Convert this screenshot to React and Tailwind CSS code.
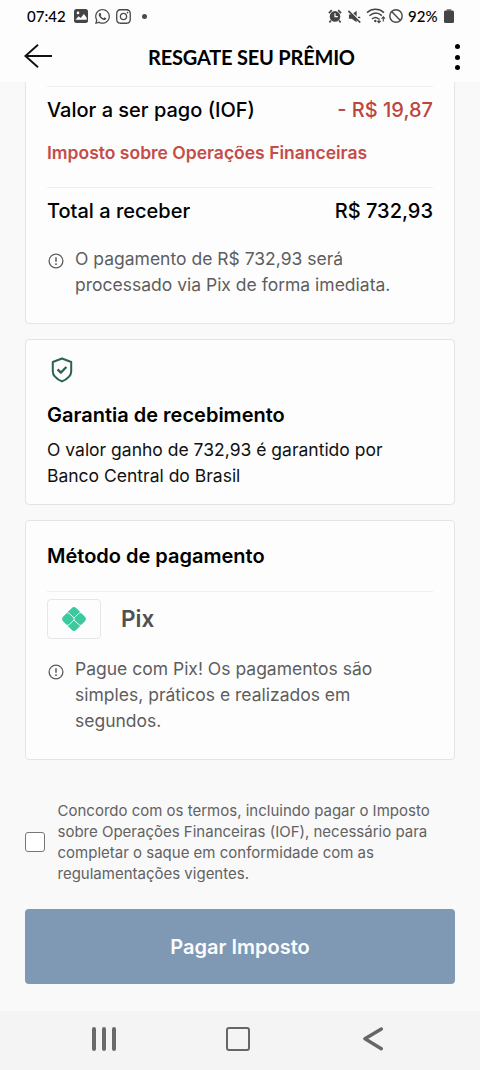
import React, { useState } from 'react';
import { FaWhatsapp, FaInstagram } from 'react-icons/fa';

const InfoIcon = () => (
  <svg className="w-4 h-4 shrink-0" viewBox="0 0 16 16" fill="none" stroke="#5c5c5c">
    <circle cx="8" cy="8" r="6.9" strokeWidth="1.3" />
    <path d="M8 4.2v4.6M8 10.2v1.7" strokeWidth="1.5" />
  </svg>
);

const ShieldIcon = () => (
  <svg className="w-[22px] h-[26px]" viewBox="0 0 22 26" fill="none" stroke="#2c6350" strokeWidth="2" strokeLinejoin="round">
    <path d="M11 1.5 20.2 5v9.4c0 4.6-4.2 7.7-9.2 10-5-2.3-9.2-5.4-9.2-10V5z" />
    <path d="m6.6 12.4 3.2 3.2 5.6-5.6" strokeWidth="2.3" />
  </svg>
);

const PixLogo = () => (
  <svg className="w-[26px] h-[26px]" viewBox="0 0 26 26">
    <rect x="3.7" y="3.7" width="18.6" height="18.6" rx="3.4" transform="rotate(45 13 13)" fill="#3cc9a0" />
    <path
      d="M4 6.7h2c1.1 0 1.9.3 2.6 1L13 12.1l4.4-4.4c.7-.7 1.5-1 2.6-1h2M4 19.3h2c1.1 0 1.9-.3 2.6-1l4.4-4.4 4.4 4.4c.7.7 1.5 1 2.6 1h2M13 12.1v1.8"
      fill="none"
      stroke="#fdfdfd"
      strokeWidth=".9"
    />
  </svg>
);

const StatusBar = () => (
  <div className="h-8 flex items-center pl-[27px] pr-[26px] text-[#4a4a4a]">
    <span className="w-[39px] text-[15px] leading-none font-medium text-black font-['Lato',sans-serif]">07:42</span>
    <svg className="ml-2 w-[14px] h-[14px]" viewBox="0 0 14 14">
      <rect width="14" height="14" rx="2.5" fill="#454545" />
      <path d="M1.5 10.8 4.6 7.3l2 1.7 3.3-4 2.8 3.7v2.1z" fill="#fff" />
      <circle cx="4" cy="3.9" r="1.3" fill="#fff" />
    </svg>
    <FaWhatsapp className="ml-[6px]" size={17} />
    <FaInstagram className="ml-[4px]" size={17} />
    <span className="ml-[10px] w-[5px] h-[5px] rounded-full bg-[#4a4a4a]" />
    <div className="ml-auto flex items-center">
      {/* alarm */}
      <svg className="w-[14px] h-[14px]" viewBox="0 0 14 14">
        <circle cx="7" cy="7.4" r="5.3" fill="#454545" />
        <path d="M.9 4.2 3.8 1.2M13.1 4.2l-2.9-3M2.8 11.6l-1.4 1.8M11.2 11.6l1.4 1.8" stroke="#454545" strokeWidth="1.7" />
        <path d="M7 4.2v3.5h2.8" stroke="#fff" strokeWidth="1.2" fill="none" />
      </svg>
      {/* muted speaker */}
      <svg className="ml-[6px] w-[13px] h-[13px]" viewBox="0 0 14 14">
        <path d="M1 4.8h3L9.3.8v12.4L4 9.3H1z" fill="#454545" />
        <path d="M10.6 8h2.6" stroke="#454545" fill="none" strokeWidth="1.5" />
        <path d="M1.2 0 14 12.6" stroke="#fff" strokeWidth="1.3" />
        <path d="M.4 1 13.2 13.6" stroke="#454545" strokeWidth="1.7" />
      </svg>
      <svg className="ml-[5px] w-[20px] h-[16px]" viewBox="0 0 20 16" fill="none" stroke="#454545" strokeWidth="1.4">
        <path d="M1 4.6c5-4.4 12-4.4 17 0M3.4 7.8c4-3.5 8.6-3.5 12.4-.2M6 11c2.2-2 4.6-2 6.5-.2" />
        <circle cx="9.3" cy="13" r="1.2" fill="#454545" stroke="none" />
        <path d="M13 10v4.6m-1.7-1.7 1.7 1.8 1.7-1.8M17.3 13.6V8.8m-1.7 1.8 1.7-1.8 1.7 1.8" strokeWidth="1.1" />
      </svg>
      <svg className="ml-[3px] w-[14px] h-[14px]" viewBox="0 0 14 14" fill="none" stroke="#454545" strokeWidth="1.4">
        <circle cx="7" cy="7" r="6.2" />
        <path d="m2.6 2.6 8.8 8.8" />
      </svg>
      <span className="ml-[5px] w-[31px] text-[15px] leading-none font-medium text-black font-['Lato',sans-serif] whitespace-nowrap">92%</span>
      <svg className="ml-[5px] w-[10px] h-[14px]" viewBox="0 0 10 14" fill="#454545">
        <rect x="2.7" width="4.6" height="3" rx=".6" fill="#888" />
        <rect y="1.5" width="10" height="12.5" rx="1.5" />
      </svg>
    </div>
  </div>
);

const Header = () => (
  <div className="h-[50px] flex items-center pl-6 pr-5">
    <svg className="w-7 h-6 -mt-[3px]" viewBox="0 0 28 24" fill="none" stroke="#111" strokeWidth="1.9">
      <path d="M28 12H1.5M14 .8 1.4 12 14 23.2" />
    </svg>
    <h1 className="ml-24 w-[208px] text-[20px] tracking-[-0.2px] font-bold leading-none text-black whitespace-nowrap font-['Lato',sans-serif]">
      RESGATE SEU PRÊMIO
    </h1>
    <div className="ml-auto w-[5px] flex flex-col gap-[5.5px]">
      <span className="w-[5px] h-[5px] rounded-full bg-black" />
      <span className="w-[5px] h-[5px] rounded-full bg-black" />
      <span className="w-[5px] h-[5px] rounded-full bg-black" />
    </div>
  </div>
);

const App = () => {
  const [accepted, setAccepted] = useState(false);

  return (
    <div className="w-[480px] h-[1070px] overflow-hidden flex flex-col bg-[#f9f9fa] text-black font-['Inter',sans-serif]">
      <div className="bg-[#fdfdfd]">
        <StatusBar />
        <Header />
      </div>

      <main className="flex-1 px-[25px]">
        <section className="h-[242px] bg-[#fdfdfd] border border-t-0 border-[#e3e4e8] rounded-b-[4px] px-[21px] pt-1">
          <div className="h-[101px] border-t border-[#eeeeef] pt-[9px]">
            <div className="flex justify-between text-[20px] leading-[28px] font-[450]">
              <span>Valor a ser pago (IOF)</span>
              <span className="text-[#bd453f]">- R$ 19,87</span>
            </div>
            <p className="mt-[15px] text-[17.5px] leading-[28px] font-semibold text-[#c44c49] whitespace-nowrap">
              Imposto sobre Operações Financeiras
            </p>
          </div>
          <div className="border-t border-[#eeeeef] pt-[9px]">
            <div className="flex justify-between text-[20px] leading-[28px] font-medium">
              <span>Total a receber</span>
              <span>R$ 732,93</span>
            </div>
          </div>
          <div className="mt-[21px] flex gap-[11px] pl-px text-[17.5px] leading-[26px] text-[#5e5e5e]">
            <div className="pt-[7px]"><InfoIcon /></div>
            <p className="whitespace-nowrap">
              O pagamento de R$ 732,93 será<br />processado via Pix de forma imediata.
            </p>
          </div>
        </section>

        <section className="mt-[15px] h-[166px] bg-[#fdfdfd] border border-[#e3e4e8] rounded-[4px] px-[21px] pt-[17px]">
          <div className="pl-1"><ShieldIcon /></div>
          <h2 className="mt-[18px] text-[20px] leading-[28px] font-semibold whitespace-nowrap">Garantia de recebimento</h2>
          <p className="mt-[8px] text-[17.5px] leading-[26px] text-[#111] whitespace-nowrap">
            O valor ganho de 732,93 é garantido por<br />Banco Central do Brasil
          </p>
        </section>

        <section className="mt-[15px] h-[240px] bg-[#fdfdfd] border border-[#e3e4e8] rounded-[4px] px-[21px] pt-[21px]">
          <h2 className="h-[49px] text-[20px] leading-[28px] font-semibold whitespace-nowrap">Método de pagamento</h2>
          <div className="border-t border-[#eeeeef] pt-[7px] flex items-center">
            <div className="w-[54px] h-[40px] flex items-center justify-center border border-[#e6e6ea] rounded-[4px]">
              <PixLogo />
            </div>
            <span className="ml-5 text-[22.5px] leading-[28px] font-semibold text-[#505050]">Pix</span>
          </div>
          <div className="mt-[17px] flex gap-[11px] pl-px text-[17.5px] leading-[26px] text-[#5e5e5e]">
            <div className="pt-2"><InfoIcon /></div>
            <p className="whitespace-nowrap">
              Pague com Pix! Os pagamentos são<br />simples, práticos e realizados em<br />segundos.
            </p>
          </div>
        </section>

        <label className="mt-10 flex items-center gap-[12.5px] text-[15px] leading-[21px] text-[#626262]">
          <input
            type="checkbox"
            checked={accepted}
            onChange={e => setAccepted(e.target.checked)}
            className="appearance-none w-5 h-5 shrink-0 rounded-[3px] border border-[#777] bg-white"
          />
          <span className="whitespace-nowrap">
            Concordo com os termos, incluindo pagar o Imposto<br />
            sobre Operações Financeiras (IOF), necessário para<br />
            completar o saque em conformidade com as<br />
            regulamentações vigentes.
          </span>
        </label>

        <button className="mt-[25px] w-full h-[75px] rounded-[4px] bg-[#7f98b4] text-[20px] font-semibold text-[#fafcff]">
          Pagar Imposto
        </button>
      </main>

      <nav className="h-[59px] flex items-center pl-[92px] pr-[97px] pb-[4px] justify-between bg-[#f4f4f4]">
        <div className="w-6 h-6 flex justify-between">
          <span className="w-1 rounded-sm bg-[#6a6a6a]" />
          <span className="w-1 rounded-sm bg-[#6a6a6a]" />
          <span className="w-1 rounded-sm bg-[#6a6a6a]" />
        </div>
        <div className="w-6 h-6 -ml-1 border-2 border-[#666] rounded-[3px]" />
        <svg className="w-5 h-6" viewBox="0 0 20 24" fill="none" stroke="#666" strokeWidth="3.4" strokeLinecap="round" strokeLinejoin="round">
          <path d="M18.3 2 2 11.8 18.3 21.7" />
        </svg>
      </nav>
    </div>
  );
};

export default App;
